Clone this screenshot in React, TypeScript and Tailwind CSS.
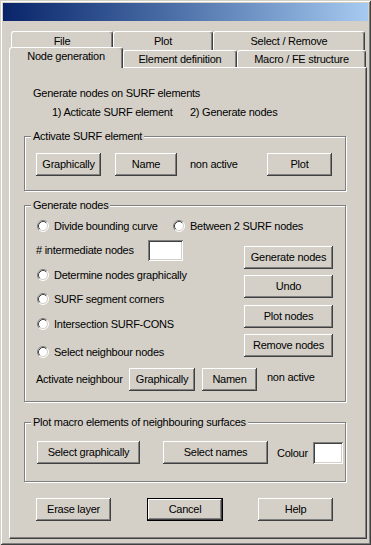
import { clsx } from "clsx";
import type { ReactNode } from "react";

const raised =
  "bg-[#d4d0c8] shadow-[inset_-1px_-1px_#404040,inset_1px_1px_#ffffff,inset_-2px_-2px_#808080,inset_2px_2px_#d4d0c8]";
const sunken =
  "bg-white shadow-[inset_1px_1px_#808080,inset_-1px_-1px_#ffffff,inset_2px_2px_#404040,inset_-2px_-2px_#d4d0c8]";

function Button({ children, className, isDefault }: { children: ReactNode; className?: string; isDefault?: boolean }) {
  return (
    <button
      type="button"
      className={clsx(
        "flex h-[23px] shrink-0 items-center justify-center text-[11px] leading-[13px] tracking-[-0.25px] text-black",
        raised,
        isDefault && "border border-black",
        className
      )}
    >
      {children}
    </button>
  );
}

function RadioDot() {
  return (
    <svg width="12" height="12" viewBox="0 0 12 12" className="shrink-0">
      <circle cx="6" cy="6" r="5" fill="#ffffff" />
      <path d="M2.11 9.89 A5.5 5.5 0 0 1 9.89 2.11" fill="none" stroke="#808080" />
      <path d="M9.89 2.11 A5.5 5.5 0 0 1 2.11 9.89" fill="none" stroke="#ffffff" />
      <path d="M2.82 9.18 A4.5 4.5 0 0 1 9.18 2.82" fill="none" stroke="#404040" />
      <path d="M9.18 2.82 A4.5 4.5 0 0 1 2.82 9.18" fill="none" stroke="#d4d0c8" />
    </svg>
  );
}

function Radio({ label, className }: { label: string; className?: string }) {
  return (
    <label className={clsx("flex h-[14px] items-center gap-[5px]", className)}>
      <RadioDot />
      <span>{label}</span>
    </label>
  );
}

function Group({ title, className, children }: { title: string; className?: string; children: ReactNode }) {
  return (
    <div
      className={clsx(
        "relative ml-[14px] w-[322px] border border-[#808080] shadow-[inset_1px_1px_#ffffff,1px_1px_#ffffff]",
        className
      )}
    >
      <span className="absolute -top-[7px] left-[6px] bg-[#d4d0c8] px-[2px] leading-[13px]">{title}</span>
      {children}
    </div>
  );
}

function Tab({ label, className }: { label: string; className?: string }) {
  return (
    <div
      className={clsx(
        "shrink-0 rounded-t-[3px] border-t border-r border-l border-t-white border-r-[#404040] border-l-white bg-[#d4d0c8] text-center leading-[13px] shadow-[inset_-1px_0_#808080]",
        className
      )}
    >
      {label}
    </div>
  );
}

export default function App() {
  return (
    <div className="h-[545px] w-[371px] overflow-hidden bg-[#d4d0c8] p-[3px] font-['Liberation_Sans',Arial,sans-serif] text-[11px] leading-[13px] tracking-[-0.25px] text-black shadow-[inset_1px_1px_#d4d0c8,inset_-1px_-1px_#404040,inset_2px_2px_#ffffff,inset_-2px_-2px_#808080]">
      <div className="h-[18px] w-[365px] bg-gradient-to-r from-[#0a246a] to-[#a6caf0]" />

      <div className="mt-[10px] ml-[8px] flex h-[19px]">
        <Tab label="File" className="h-[19px] w-[102px] pt-[3px]" />
        <Tab label="Plot" className="h-[19px] w-[100px] pt-[3px]" />
        <Tab label="Select / Remove" className="h-[19px] w-[152px] pt-[3px]" />
      </div>
      <div className="ml-[6px] flex h-[17px] items-end">
        <Tab label="Node generation" className="relative z-10 -mb-[1px] h-[21px] w-[114px] pt-[2px]" />
        <Tab label="Element definition" className="h-[17px] w-[114px] pt-[2px]" />
        <Tab label="Macro / FE structure" className="h-[17px] w-[129px] pt-[2px]" />
      </div>

      <div className="ml-[6px] h-[472px] w-[358px] border border-t-white border-r-[#404040] border-b-[#404040] border-l-white shadow-[inset_-1px_-1px_#808080]">
        <div className="mt-[19px] ml-[23px]">Generate nodes on SURF elements</div>
        <div className="mt-[6px] ml-[42px] flex">
          <span className="w-[138px]">1) Acticate SURF element</span>
          <span>2) Generate nodes</span>
        </div>

        <Group title="Activate SURF element" className="mt-[17px] h-[55px]">
          <div className="flex items-center pt-[16px] pl-[11px]">
            <Button className="w-[65px]">Graphically</Button>
            <Button className="ml-[14px] w-[62px]">Name</Button>
            <span className="ml-[13px] w-[77px]">non active</span>
            <Button className="w-[65px]">Plot</Button>
          </div>
        </Group>

        <Group title="Generate nodes" className="mt-[14px] h-[197px]">
          <div className="mt-[13px] flex pl-[12px]">
            <Radio label="Divide bounding curve" className="w-[136px]" />
            <Radio label="Between 2 SURF nodes" />
          </div>
          <div className="mt-[7px] flex">
            <div className="w-[219px] pl-[11px]">
              <div className="flex h-[21px] items-center">
                <span className="w-[112px]"># intermediate nodes</span>
                <div className={clsx("h-[21px] w-[35px]", sunken)} />
              </div>
              <Radio label="Determine nodes graphically" className="mt-[7px] ml-[1px]" />
              <Radio label="SURF segment corners" className="mt-[10px] ml-[1px]" />
              <Radio label="Intersection SURF-CONS" className="mt-[11px] ml-[1px]" />
              <Radio label="Select neighbour nodes" className="mt-[14px] ml-[1px]" />
            </div>
            <div className="flex flex-col">
              <Button className="mt-[6px] w-[89px]">Generate nodes</Button>
              <Button className="mt-[6px] w-[89px]">Undo</Button>
              <Button className="mt-[7px] w-[89px]">Plot nodes</Button>
              <Button className="mt-[6px] w-[89px]">Remove nodes</Button>
            </div>
          </div>
          <div className="mt-[9px] flex items-center pl-[11px]">
            <span className="w-[93px]">Activate neighbour</span>
            <Button className="w-[66px]">Graphically</Button>
            <Button className="ml-[7px] w-[55px]">Namen</Button>
            <span className="ml-[10px] mb-[5px]">non active</span>
          </div>
        </Group>

        <Group title="Plot macro elements of neighbouring surfaces" className="mt-[20px] h-[60px]">
          <div className="flex items-center pt-[18px] pl-[12px]">
            <Button className="w-[103px]">Select graphically</Button>
            <Button className="ml-[23px] w-[105px]">Select names</Button>
            <span className="ml-[9px] w-[36px] pt-[2px]">Colour</span>
            <div className={clsx("h-[22px] w-[30px]", sunken)} />
          </div>
        </Group>

        <div className="mt-[16px] flex pl-[26px]">
          <Button className="w-[75px]">Erase layer</Button>
          <Button isDefault className="ml-[36px] w-[76px]">
            Cancel
          </Button>
          <Button className="ml-[35px] w-[75px]">Help</Button>
        </div>
      </div>
    </div>
  );
}
